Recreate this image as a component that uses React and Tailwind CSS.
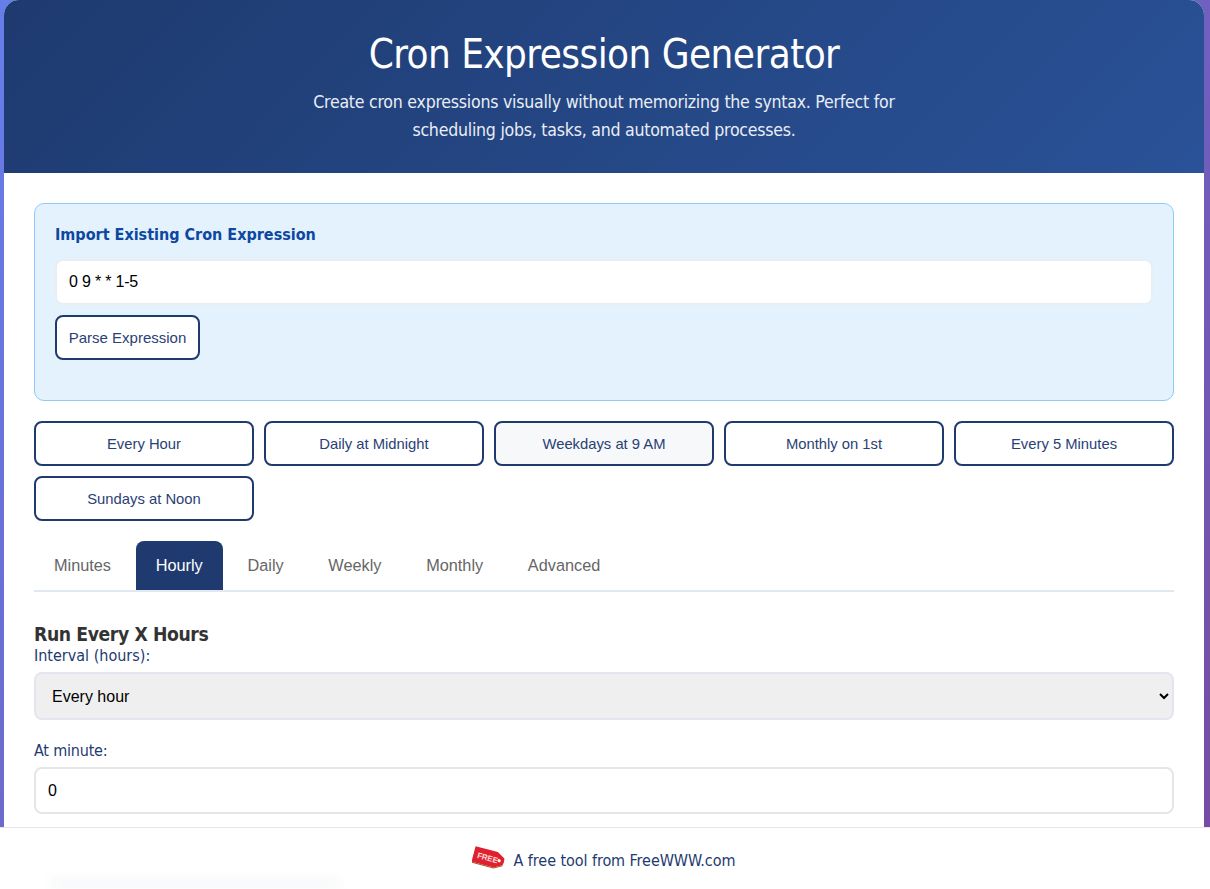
import React from "react";

const presets = ["Every Hour", "Daily at Midnight", "Weekdays at 9 AM", "Monthly on 1st", "Every 5 Minutes", "Sundays at Noon"];
const tabs = ["Minutes", "Hourly", "Daily", "Weekly", "Monthly", "Advanced"];

function FreeTag() {
  return (
    <svg width="34" height="28" viewBox="0 0 34 28" className="-mt-[6px] shrink-0">
      <g transform="rotate(15 17 14)">
        <path d="M1 6 L24 6 L32 10.5 Q33 14 32 17.5 L24 22 L1 22 Z" fill="#e0202f" />
        <path d="M1 22 L24 22 L32 17.5 L32 18.5 L24 23 L1 23 Z" fill="#a8501f" />
        <circle cx="27.5" cy="14" r="1.6" fill="#ffffff" />
        <text x="5" y="17" fontSize="8" fontWeight="700" fill="#ffd9d9" fontFamily="'Liberation Sans', sans-serif">FREE</text>
      </g>
    </svg>
  );
}

export default function App() {
  return (
    <div className="relative h-[889px] overflow-hidden bg-[linear-gradient(135deg,#667eea,#764ba2)] pl-1 font-['Liberation_Sans',sans-serif]">
      <div className="w-[1200px] overflow-hidden rounded-t-[15px] bg-white">
        <header className="h-[173px] bg-[linear-gradient(135deg,#1e3a6f,#2a5298)] pt-[29px] text-center text-white font-['DejaVu_Sans_Condensed','DejaVu_Sans',sans-serif]">
          <h1 className="text-[40px] leading-[50px] font-normal tracking-[-0.56px]">Cron Expression Generator</h1>
          <p className="mx-auto mt-[9px] max-w-[600px] text-[17.6px] leading-[28px] tracking-[-0.25px] text-[#e9edf5]">
            Create cron expressions visually without memorizing the syntax. Perfect for scheduling jobs, tasks, and automated processes.
          </p>
        </header>

        <main className="p-[30px]">
          <section className="h-[198px] rounded-[10px] border border-[#90caf9] bg-[#e3f2fd] px-5 pt-[21px]">
            <h3 className="text-[16px] leading-5 font-bold text-[#0d47a1] font-['DejaVu_Sans_Condensed','DejaVu_Sans',sans-serif]">Import Existing Cron Expression</h3>
            <input
              defaultValue="0 9 * * 1-5"
              className="mt-[14px] block h-[46px] w-full rounded-lg border-2 border-[#e9eef3] bg-white px-3 text-[16px] tracking-[-0.2px] text-black outline-none"
            />
            <button className="mt-[10px] block h-[45px] w-[145px] rounded-lg border-2 border-[#1e3a6f] bg-white pt-px text-[15px] text-[#2a3f75]">
              Parse Expression
            </button>
          </section>

          <div className="mt-5 grid grid-cols-5 gap-2.5">
            {presets.map((p) => (
              <button
                key={p}
                className={`h-[45px] rounded-lg border-2 border-[#1e3a6f] pt-px text-[14.8px] text-[#2a3f75] ${p === "Weekdays at 9 AM" ? "bg-[#f6f8f9]" : "bg-white"}`}
              >
                {p}
              </button>
            ))}
          </div>

          <nav className="mt-5 flex h-[51px] gap-[4.7px] border-b-2 border-[#e2e8f0]">
            {tabs.map((t) => (
              <div
                key={t}
                className={`flex h-[49px] items-center rounded-t-lg px-5 text-[16.3px] ${t === "Hourly" ? "bg-[#1e3a6f] text-white" : "text-[#666666]"}`}
              >
                {t}
              </div>
            ))}
          </nav>

          <h3 className="mt-[31px] text-[19.2px] leading-[23px] font-bold tracking-[-0.4px] text-[#333333] font-['DejaVu_Sans_Condensed','DejaVu_Sans',sans-serif]">Run Every X Hours</h3>
          <label className="block text-[16px] leading-[20px] text-[#1e3a6f] font-['DejaVu_Sans_Condensed','DejaVu_Sans',sans-serif]">Interval (hours):</label>
          <select className="mt-[6px] block h-[48px] w-full rounded-lg border-2 border-[#e3e6ee] bg-[#efefef] px-3 text-[16px] text-black outline-none appearance-auto">
            <option>Every hour</option>
          </select>
          <label className="mt-[21px] block text-[16px] leading-[20px] tracking-[-0.2px] text-[#1e3a6f] font-['DejaVu_Sans_Condensed','DejaVu_Sans',sans-serif]">At minute:</label>
          <input
            defaultValue="0"
            className="mt-[6px] block h-[47px] w-full rounded-lg border-2 border-[#e4e6e8] bg-white px-3 text-[16px] text-black outline-none"
          />
        </main>
      </div>

      <footer className="absolute inset-x-0 bottom-0 flex h-[62px] items-center justify-center gap-[8px] border-t border-[#e4e6ea] bg-white pt-[5px] pr-[3px] text-[16px] tracking-[-0.07px] text-[#1e3a6f] font-['DejaVu_Sans_Condensed','DejaVu_Sans',sans-serif]">
        <FreeTag />
        <span>A free tool from FreeWWW.com</span>
        <div className="absolute bottom-0 left-[50px] h-[12px] w-[290px] bg-[#f8f9fa] blur-[5px]" />
      </footer>
    </div>
  );
}
